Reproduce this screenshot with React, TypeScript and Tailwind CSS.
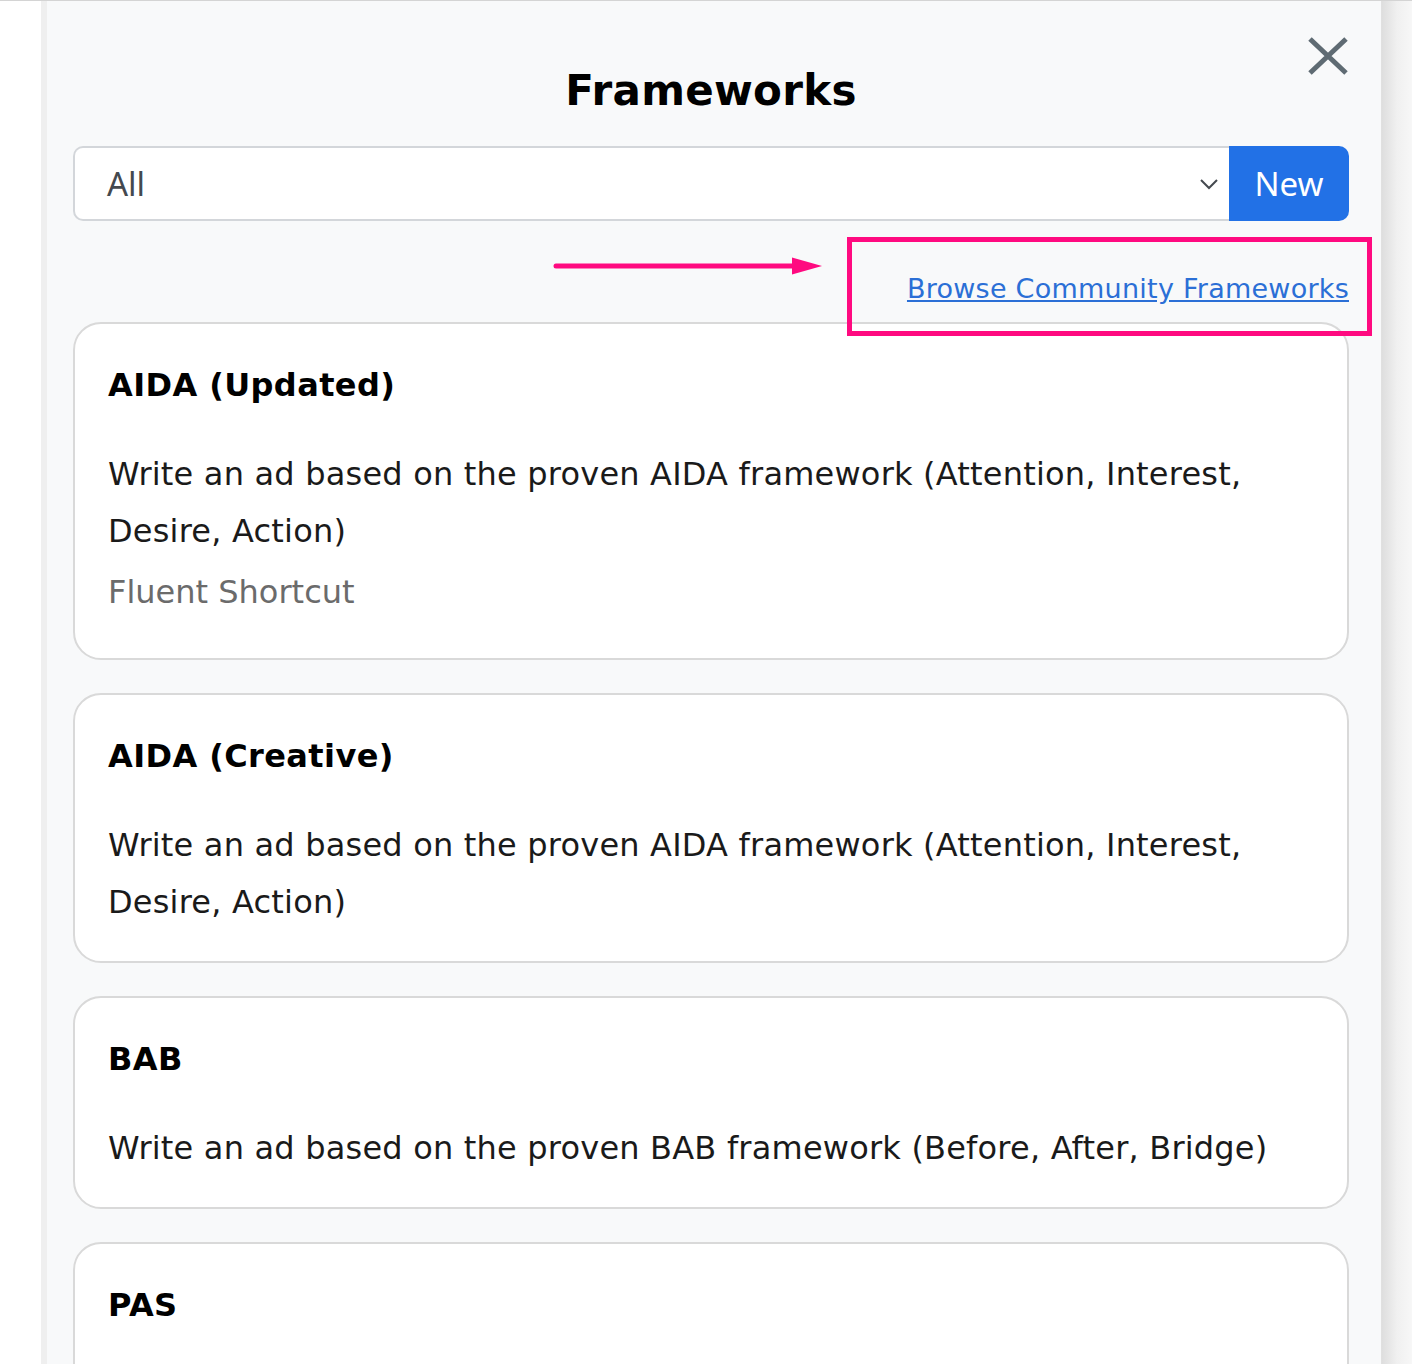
import React from "react";

const cards = [
  {
    title: "AIDA (Updated)",
    desc: "Write an ad based on the proven AIDA framework (Attention, Interest, Desire, Action)",
    sub: "Fluent Shortcut",
  },
  {
    title: "AIDA (Creative)",
    desc: "Write an ad based on the proven AIDA framework (Attention, Interest, Desire, Action)",
  },
  {
    title: "BAB",
    desc: "Write an ad based on the proven BAB framework (Before, After, Bridge)",
  },
  {
    title: "PAS",
    desc: "Write an ad based on the proven PAS framework (Problem, Agitate, Solution)",
  },
];

export default function App() {
  return (
    <div
      className="w-[1412px] h-[1364px] overflow-hidden bg-white flex border-t border-[#d4d4d4]"
      style={{ fontFamily: '"DejaVu Sans", Verdana, sans-serif' }}
    >
      <div className="w-[41px] shrink-0 bg-white" />
      <div className="relative w-[1340px] shrink-0 bg-[#f8f9fa] border-l-[6px] border-[#efefef] pl-[26px] pr-[32px]">
        <button className="absolute right-[33px] top-[36px] w-[40px] h-[38px]">
          <svg width="40" height="38" viewBox="0 0 40 38" className="block">
            <path d="M2 2 L38 36 M38 2 L2 36" stroke="#5f6b73" strokeWidth="5" />
          </svg>
        </button>
        <h1 className="text-center text-[42px] tracking-[0.3px] font-bold text-black pt-[64px] leading-[52px]">
          Frameworks
        </h1>
        <div className="mt-[29px] flex h-[75px]">
          <div
            className="flex-1 flex items-center justify-between bg-white border-2 border-[#d3d6da] border-r-0 rounded-l-[10px] pl-[32px] pr-[10px]"
            style={{ fontFamily: '"Noto Sans", Inter, sans-serif' }}
          >
            <span className="text-[33px] text-[#44494f]">All</span>
            <svg width="20" height="12" viewBox="0 0 20 12">
              <path d="M2 2 L10 10 L18 2" stroke="#44494f" strokeWidth="2" fill="none" />
            </svg>
          </div>
          <button
            className="w-[120px] bg-[#2271e6] text-white text-[33px] rounded-r-[10px]"
            style={{ fontFamily: '"Noto Sans", Inter, sans-serif' }}
          >
            New
          </button>
        </div>
        <div className="relative flex justify-end h-[101px] items-start pt-[50px]">
          <a
            href="#"
            className="text-[27px] tracking-[0.25px] text-[#2b6fd6] underline leading-[36px]"
          >
            Browse Community Frameworks
          </a>
          <svg
            className="absolute left-[480px] top-[32px]"
            width="278"
            height="26"
            viewBox="0 0 278 26"
          >
            <path d="M3 13 L245 13" stroke="#ff0a80" strokeWidth="5" strokeLinecap="round" />
            <path d="M239 4.5 L269 13 L239 21.5 Z" fill="#ff0a80" />
          </svg>
          <div className="absolute left-[774px] top-[16px] w-[525px] h-[99px] border-[5px] border-[#ff0a80] z-10" />
        </div>
        <div className="flex flex-col gap-[33px]">
          {cards.map((c) => (
            <div
              key={c.title}
              className="bg-white border-2 border-[#d9d9d9] rounded-[28px] px-[33px] pt-[41px] pb-[30px]"
            >
              <div className="text-[32px] tracking-[0.4px] font-bold text-black leading-[40px]">
                {c.title}
              </div>
              <div className="mt-[41px] text-[32px] tracking-[0.2px] text-[#1a1a1a] leading-[57px]">
                {c.desc}
              </div>
              {c.sub && (
                <div className="mt-[4px] mb-[7px] text-[32px] tracking-[0px] text-[#6b6b6b] leading-[57px]">
                  {c.sub}
                </div>
              )}
            </div>
          ))}
        </div>
      </div>
      <div className="flex-1 bg-gradient-to-r from-[#dedede] via-[#f0f0f0] to-[#f7f7f7] border-l border-[#e0e0e0]" />
    </div>
  );
}
